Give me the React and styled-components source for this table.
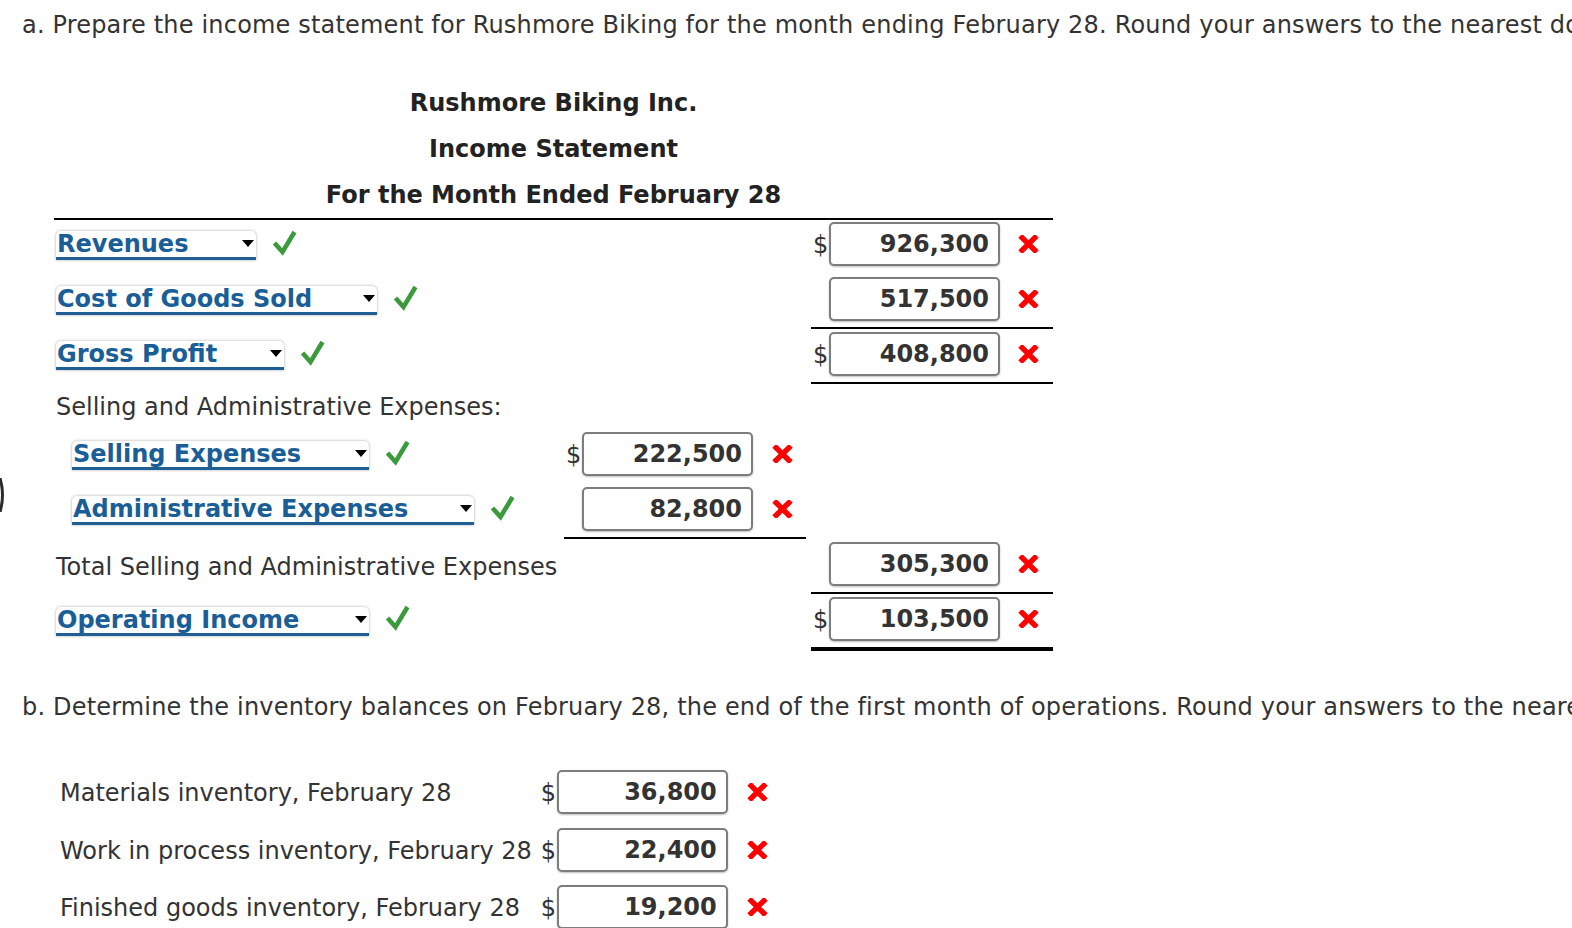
import React from 'react';
import styled, { createGlobalStyle } from 'styled-components';

const Global = createGlobalStyle`
  html, body { margin: 0; padding: 0; overflow: hidden; background: #fff; }
  body { font-family: "DejaVu Sans", Verdana, sans-serif; font-size: 24px; color: #333; }
`;

const Page = styled.div`
  position: relative;
  width: 1572px;
  height: 928px;
  overflow: hidden;
  box-sizing: border-box;
  padding: 11px 0 0 22px;
`;

const EdgeMark = styled.svg`
  position: absolute;
  left: 0;
  top: 478px;
`;

const Prompt = styled.p`
  margin: ${p => p.$top || 0}px 0 0;
  white-space: nowrap;
  line-height: 28px;
  letter-spacing: 0.18px;
  color: #333;
`;

const Statement = styled.div`
  width: 999px;
  margin: 41px 0 0 32px;
`;

const Titles = styled.div`
  text-align: center;
  font-weight: bold;
  line-height: 46px;
  color: #222;
  border-bottom: 2px solid #000;
`;

const Grid = styled.div`
  display: grid;
  grid-template-columns: 505px 242px 242px;
  column-gap: 5px;
  row-gap: 1px;
`;

const Cell = styled.div`
  height: 44px;
  padding: 2px 0 6px ${p => (p.$indent ? 18 : 2)}px;
  display: flex;
  align-items: center;
  border-bottom: ${p =>
    p.$rule === 'double' ? '4px solid #000' : p.$rule ? '2px solid #000' : '2px solid transparent'};
`;

const HeadingCell = styled.div`
  grid-column: 1 / -1;
  height: 44px;
  padding-left: 2px;
  display: flex;
  align-items: center;
`;

const TotalLabel = styled.span`
  margin-top: 6px;
`;

const Select = styled.div`
  box-sizing: border-box;
  width: ${p => p.$w}px;
  height: 29px;
  margin-top: ${p => p.$drop || 2}px;
  display: flex;
  align-items: flex-start;
  padding: 0 2px 0 1px;
  background: #fff;
  border-radius: 5px 5px 0 0;
  box-shadow: 0 0 3px rgba(0, 0, 0, 0.35);
  border-bottom: 3px solid #1f5f93;
  color: #1a5e98;
  font-weight: bold;
  line-height: 27px;
  white-space: nowrap;
`;

const Arrow = styled.span`
  margin: 9px 0 0 auto;
  width: 0;
  height: 0;
  border-left: 6px solid transparent;
  border-right: 6px solid transparent;
  border-top: 7px solid #000;
`;

const Check = styled.svg`
  margin-left: 16px;
  margin-top: -3px;
  flex: none;
`;

const Dollar = styled.span`
  width: 16px;
  flex: none;
  color: #333;
  line-height: 28px;
  margin-top: 2px;
`;

const Input = styled.div`
  box-sizing: border-box;
  width: 171px;
  height: 44px;
  flex: none;
  border: 2px solid #7d7d7d;
  border-radius: 5px;
  box-shadow: 0 1px 2px rgba(0, 0, 0, 0.25);
  background: #fff;
  display: flex;
  align-items: center;
  justify-content: flex-end;
  padding-right: 9px;
  font-weight: bold;
  color: #333;
`;

const Cross = styled.svg`
  margin-left: ${p => p.$gap || 18}px;
  flex: none;
`;

const PartB = styled.div`
  display: grid;
  grid-template-columns: max-content 16px 171px max-content;
  row-gap: 13.5px;
  align-items: center;
  margin: 49px 0 0 38px;
`;

const BLabel = styled.span`
  padding-right: 9px;
  line-height: 28px;
  margin-top: 2px;
`;

const CheckIcon = () => (
  <Check width="25" height="27" viewBox="0 0 25 27">
    <path d="M2.5 14 L10.5 23 L22.5 3" fill="none" stroke="#3b9a3b" strokeWidth="4.6" />
  </Check>
);

const CrossIcon = ({ gap }) => (
  <Cross $gap={gap} width="21" height="18" viewBox="0 0 21 18">
    <path d="M2.2 0.8 L18.8 17.2 M18.8 0.8 L2.2 17.2" stroke="#ff0000" strokeWidth="5.4" />
  </Cross>
);

const Amount = ({ value, dollar, gap }) => (
  <>
    <Dollar>{dollar ? '$' : ''}</Dollar>
    <Input>{value}</Input>
    <CrossIcon gap={gap} />
  </>
);

const Drop = ({ label, w, drop }) => (
  <>
    <Select $w={w} $drop={drop}>
      <span>{label}</span>
      <Arrow />
    </Select>
    <CheckIcon />
  </>
);

export default function App() {
  return (
    <>
      <Global />
      <Page>
        <EdgeMark width="6" height="34" viewBox="0 0 6 34">
          <path d="M0 0 Q5 17 0 34" fill="none" stroke="#2a2a2a" strokeWidth="3" />
        </EdgeMark>
        <Prompt>
          a. Prepare the income statement for Rushmore Biking for the month ending February 28. Round your answers to the nearest dollar.
        </Prompt>
        <Statement>
          <Titles>
            <div>Rushmore Biking Inc.</div>
            <div>Income Statement</div>
            <div>For the Month Ended February 28</div>
          </Titles>
          <Grid>
            <Cell><Drop label="Revenues" w={200} /></Cell>
            <Cell />
            <Cell><Amount dollar value="926,300" /></Cell>

            <Cell><Drop label="Cost of Goods Sold" w={321} /></Cell>
            <Cell />
            <Cell $rule><Amount value="517,500" /></Cell>

            <Cell><Drop label="Gross Profit" w={228} /></Cell>
            <Cell />
            <Cell $rule><Amount dollar value="408,800" /></Cell>

            <HeadingCell>Selling and Administrative Expenses:</HeadingCell>

            <Cell $indent><Drop label="Selling Expenses" w={297} /></Cell>
            <Cell><Amount dollar value="222,500" gap={19} /></Cell>
            <Cell />

            <Cell $indent><Drop label="Administrative Expenses" w={402} /></Cell>
            <Cell $rule><Amount value="82,800" gap={19} /></Cell>
            <Cell />

            <Cell><TotalLabel>Total Selling and Administrative Expenses</TotalLabel></Cell>
            <Cell />
            <Cell $rule><Amount value="305,300" /></Cell>

            <Cell><Drop label="Operating Income" w={313} drop={5} /></Cell>
            <Cell />
            <Cell $rule="double"><Amount dollar value="103,500" /></Cell>
          </Grid>
        </Statement>
        <Prompt $top={42}>
          b. Determine the inventory balances on February 28, the end of the first month of operations. Round your answers to the nearest dollar.
        </Prompt>
        <PartB>
          <BLabel>Materials inventory, February 28</BLabel>
          <Dollar>$</Dollar>
          <Input>36,800</Input>
          <CrossIcon gap={19} />

          <BLabel>Work in process inventory, February 28</BLabel>
          <Dollar>$</Dollar>
          <Input>22,400</Input>
          <CrossIcon gap={19} />

          <BLabel>Finished goods inventory, February 28</BLabel>
          <Dollar>$</Dollar>
          <Input>19,200</Input>
          <CrossIcon gap={19} />
        </PartB>
      </Page>
    </>
  );
}
